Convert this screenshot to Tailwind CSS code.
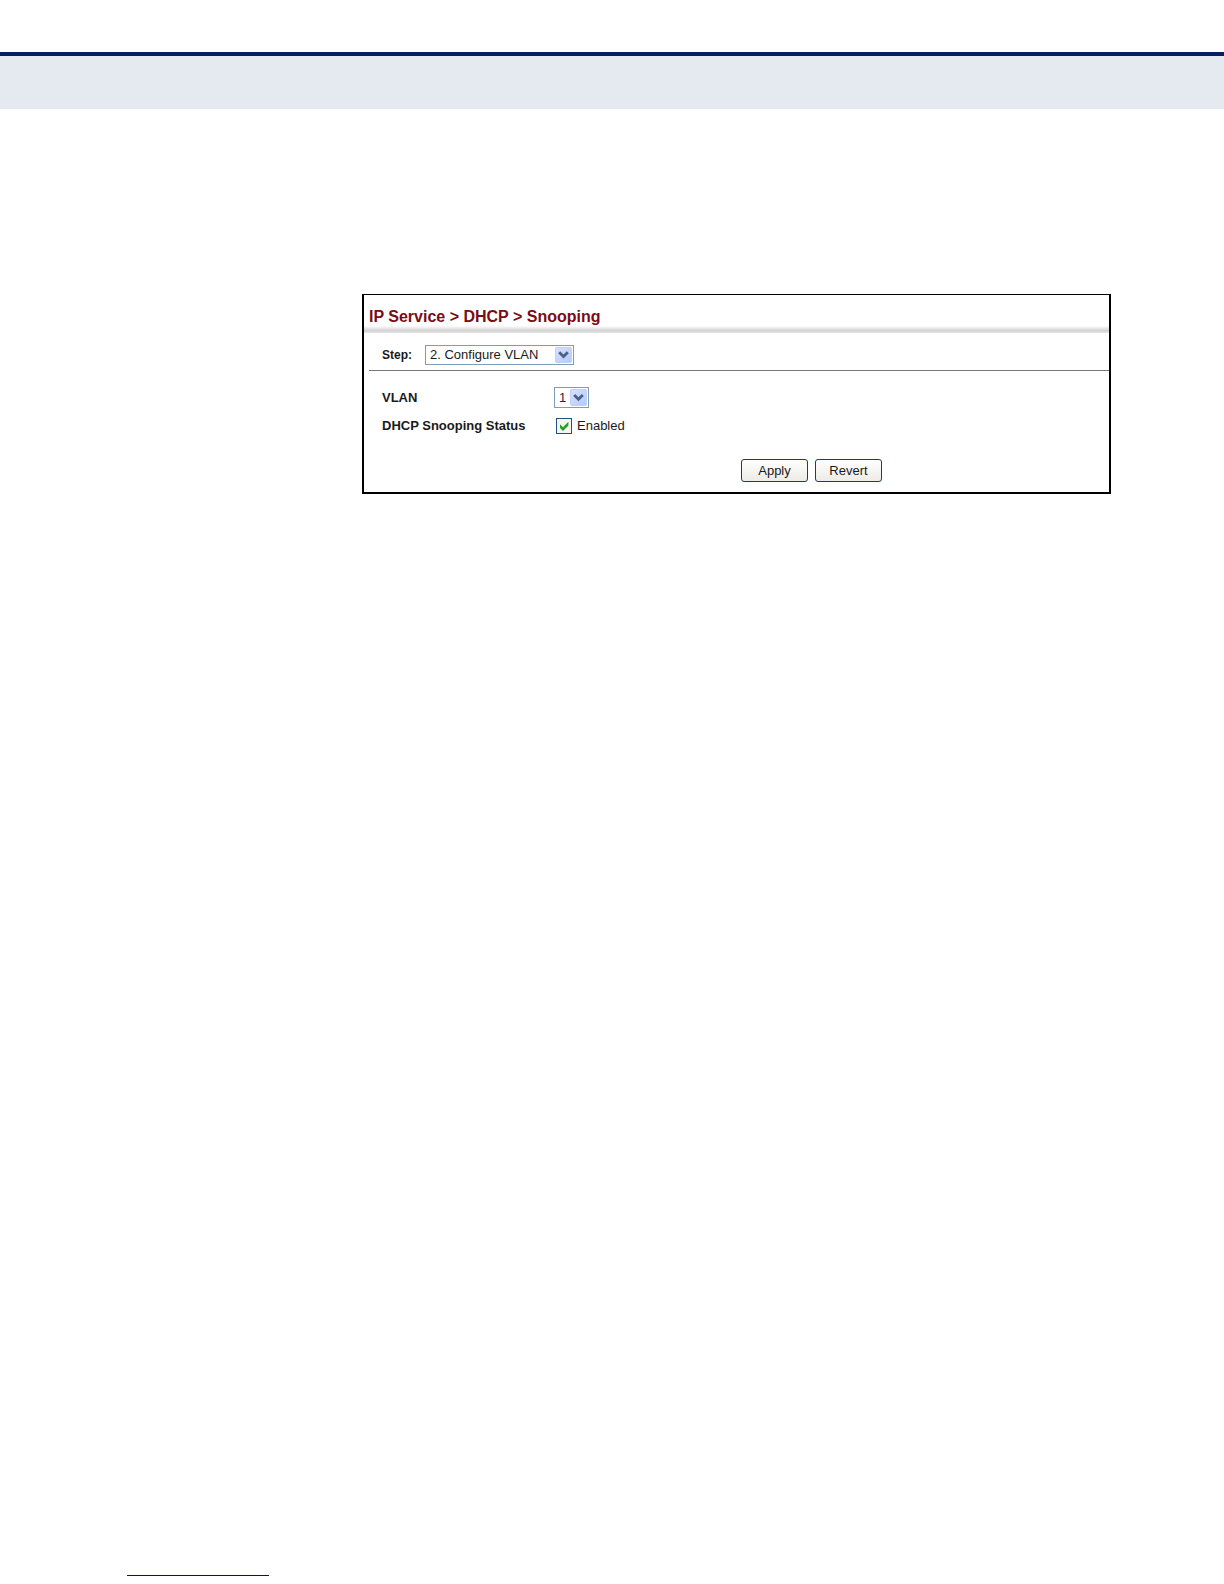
<!DOCTYPE html>
<html lang="en">
<head>
  <meta charset="utf-8"/>
  <meta content="width=device-width, initial-scale=1" name="viewport"/>
  <title>IP Service &gt; DHCP &gt; Snooping</title>
  <script src="https://cdn.jsdelivr.net/npm/@tailwindcss/browser@4"></script>
</head>
<body class="bg-white text-[#1a1a1a] font-['Liberation_Sans',Arial,sans-serif] text-[13px] leading-4 min-h-screen flex flex-col">

  <!-- Page band -->
  <header class="mt-[52px] h-[57px] border-t-4 border-[#06205f] bg-[#e5e9f0]"></header>

  <main class="flex-1 pt-[185px] pl-[362px] pr-[113px]">
    <section class="border-2 border-t border-black pb-[10px]">
      <h1 class="pl-[5px] pt-3 h-[30px] text-base leading-5 font-bold text-[#7a0c14]">IP Service &gt; DHCP &gt; Snooping</h1>
      <div class="h-2 bg-linear-to-b from-white from-10% via-[#d2d2d2] via-70% to-[#e6e6e6]"></div>

      <form>
        <!-- Step -->
        <div class="ml-[5px] pl-[13px] pt-3 pb-[5px] flex items-center gap-[13px] border-b border-[#777777]">
          <label for="step" class="font-bold text-xs">Step:</label>
          <div class="relative w-[149px]">
            <select id="step" class="appearance-none block w-full h-5 pl-1 pr-6 border border-[#7f9db9] bg-white leading-4">
              <option>2. Configure VLAN</option>
            </select>
            <svg class="absolute right-[2px] top-[2px] w-[17px] h-4 pointer-events-none" viewBox="0 0 17 16">
              <defs>
                <linearGradient id="arrowFill" x1="0" y1="0" x2="1" y2="1">
                  <stop offset="0" stop-color="#d6e2fe"/>
                  <stop offset="1" stop-color="#b4c9fb"/>
                </linearGradient>
              </defs>
              <rect x="0.5" y="0.5" width="16" height="15" rx="1.5" fill="url(#arrowFill)" stroke="#c0d0f6"/>
              <path d="M4.2 5.2 8.5 9.5 12.8 5.2" fill="none" stroke="#4a6188" stroke-width="2.8"/>
            </svg>
          </div>
        </div>

        <!-- Settings -->
        <div class="pl-[18px] pt-4 grid grid-cols-[172px_1fr] gap-y-[10px] items-center">
          <label for="vlan" class="font-bold">VLAN</label>
          <div class="relative w-[35px]">
            <select id="vlan" class="appearance-none block w-full h-[21px] pl-1 border border-[#7f9db9] bg-white text-[#4a1040] leading-4">
              <option>1</option>
            </select>
            <svg class="absolute right-[2px] top-[2px] w-[17px] h-[17px] pointer-events-none" viewBox="0 0 17 17">
              <rect x="0.5" y="0.5" width="16" height="16" rx="1.5" fill="url(#arrowFill)" stroke="#c0d0f6"/>
              <path d="M4.2 6 8.5 10.3 12.8 6" fill="none" stroke="#4a6188" stroke-width="2.8"/>
            </svg>
          </div>

          <label for="snooping" class="font-bold">DHCP Snooping Status</label>
          <label class="pl-[2px] flex items-center gap-[5px]">
            <span class="relative w-4 h-4">
              <input id="snooping" type="checkbox" checked class="peer appearance-none block w-4 h-4 border border-[#1c5180] bg-[#f4f4f1]"/>
              <svg class="hidden peer-checked:block absolute inset-0 w-4 h-4 pointer-events-none" viewBox="0 0 16 16">
                <path d="M4 6.2 7 9.2 12.4 3.8V7.6L7 13 4 10Z" fill="#21a121"/>
              </svg>
            </span>
            Enabled
          </label>
        </div>

        <!-- Actions -->
        <div class="mt-[25px] pr-[227px] flex justify-end gap-[7px]">
          <button type="submit" class="w-[67px] h-[23px] rounded-[3px] border border-[#0f4175] bg-linear-to-b from-white to-[#ecebe5]">Apply</button>
          <button type="reset" class="w-[67px] h-[23px] rounded-[3px] border border-[#0f4175] bg-linear-to-b from-white to-[#ecebe5]">Revert</button>
        </div>
      </form>
    </section>
  </main>

  <footer class="pl-[127px] pb-2">
    <div class="w-[142px] h-px bg-[#0a0a80]"></div>
  </footer>

</body>
</html>
